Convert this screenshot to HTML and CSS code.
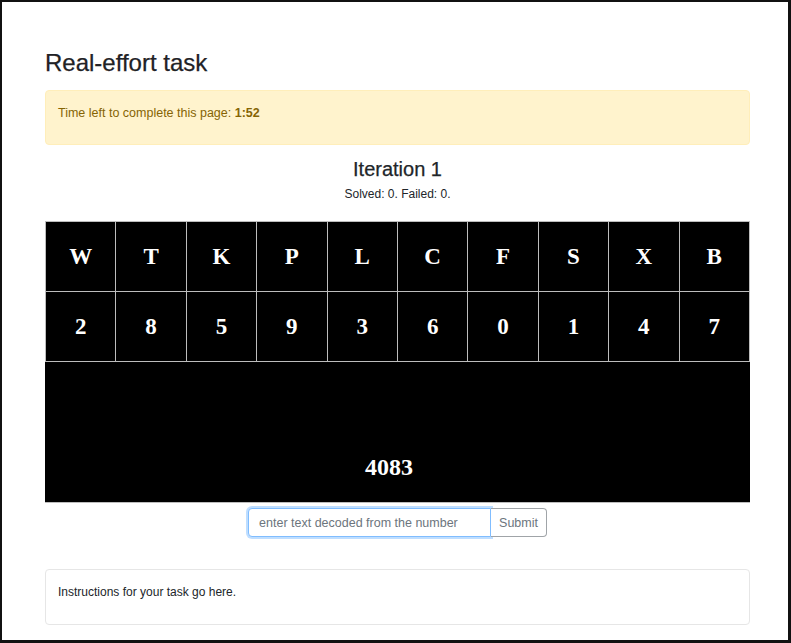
FILE: index.html
```html
<!DOCTYPE html>
<html>
<head>
<meta charset="utf-8">
<link rel="stylesheet" href="styles.css">
</head>
<body>
<div class="frame">
  <div class="container">
    <h1 class="title">Real-effort task</h1>
    <div class="alert">Time left to complete this page: <b>1:52</b></div>
    <h2 class="iteration">Iteration 1</h2>
    <p class="stats">Solved: 0. Failed: 0.</p>
    <table class="code">
      <tr><td>W</td><td>T</td><td>K</td><td>P</td><td>L</td><td>C</td><td>F</td><td>S</td><td>X</td><td>B</td></tr>
      <tr><td>2</td><td>8</td><td>5</td><td>9</td><td>3</td><td>6</td><td>0</td><td>1</td><td>4</td><td>7</td></tr>
      <tr><td class="number" colspan="10">4083</td></tr>
    </table>
    <div class="answer">
      <input class="answer-input" type="text" placeholder="enter text decoded from the number">
      <button class="answer-btn">Submit</button>
    </div>
    <div class="card">Instructions for your task go here.</div>
  </div>
</div>
</body>
</html>
```
FILE: styles.css
```css
html, body {
  margin: 0;
  padding: 0;
  background: #fff;
}
.frame {
  width: 791px;
  height: 643px;
  box-sizing: border-box;
  border-style: solid;
  border-color: #111;
  border-width: 2px 3px 3px 2px;
  overflow: hidden;
  font-family: "Liberation Sans", Arial, sans-serif;
  color: #212529;
}
.container {
  margin-left: 43px;
  width: 705px;
  padding-top: 47px;
}
.title {
  margin: 0;
  font-size: 24px;
  font-weight: 500;
  line-height: 28px;
  height: 41px;
  color: #1f2226;
  -webkit-text-stroke: 0.25px #1f2226;
}
.alert {
  background: #fff3cd;
  border: 1px solid #ffeeba;
  border-radius: 4px;
  color: #856404;
  font-size: 12.5px;
  line-height: 20px;
  padding: 12px 12px 21px;
}
.iteration {
  margin: 12px 0 0;
  text-align: center;
  font-size: 20px;
  font-weight: 500;
  line-height: 24px;
  -webkit-text-stroke: 0.25px #212529;
}
.stats {
  margin: 5px 0 0;
  text-align: center;
  font-size: 12px;
  line-height: 16px;
}
.code {
  margin-top: 19px;
  width: 705px;
  border-collapse: collapse;
  background: #000;
  table-layout: fixed;
}
.code td {
  border: 1px solid #bdbdbd;
  color: #fff;
  font-family: "Liberation Serif", "Times New Roman", serif;
  font-weight: bold;
  font-size: 23px;
  text-align: center;
  height: 69px;
  padding: 0;
}
.code td.number {
  height: 141px;
  border-color: #000;
  border-bottom-color: #bdbdbd;
  padding: 71px 17px 0 0;
  box-sizing: border-box;
  font-size: 24px;
}
.answer {
  display: flex;
  justify-content: center;
  margin-top: 5px;
}
.answer-input {
  width: 243px;
  height: 29px;
  box-sizing: border-box;
  border: 1px solid #80bdff;
  border-radius: 4px 0 0 4px;
  box-shadow: 0 0 0 2px rgba(0, 123, 255, 0.25);
  padding: 0 10px;
  font-family: "Liberation Sans", Arial, sans-serif;
  font-size: 12.5px;
  color: #495057;
  outline: none;
}
.answer-input::placeholder {
  color: #6c757d;
}
.answer-btn {
  height: 29px;
  box-sizing: border-box;
  border: 1px solid #a0a4a8;
  border-left: none;
  border-radius: 0 4px 4px 0;
  background: #fff;
  color: #6c757d;
  font-family: "Liberation Sans", Arial, sans-serif;
  font-size: 12.5px;
  padding: 0 8px;
}
.card {
  margin-top: 32px;
  border: 1px solid #e6e6e6;
  border-radius: 4px;
  font-size: 12px;
  line-height: 16px;
  padding: 14px 12px 24px;
  color: #212529;
}
```
